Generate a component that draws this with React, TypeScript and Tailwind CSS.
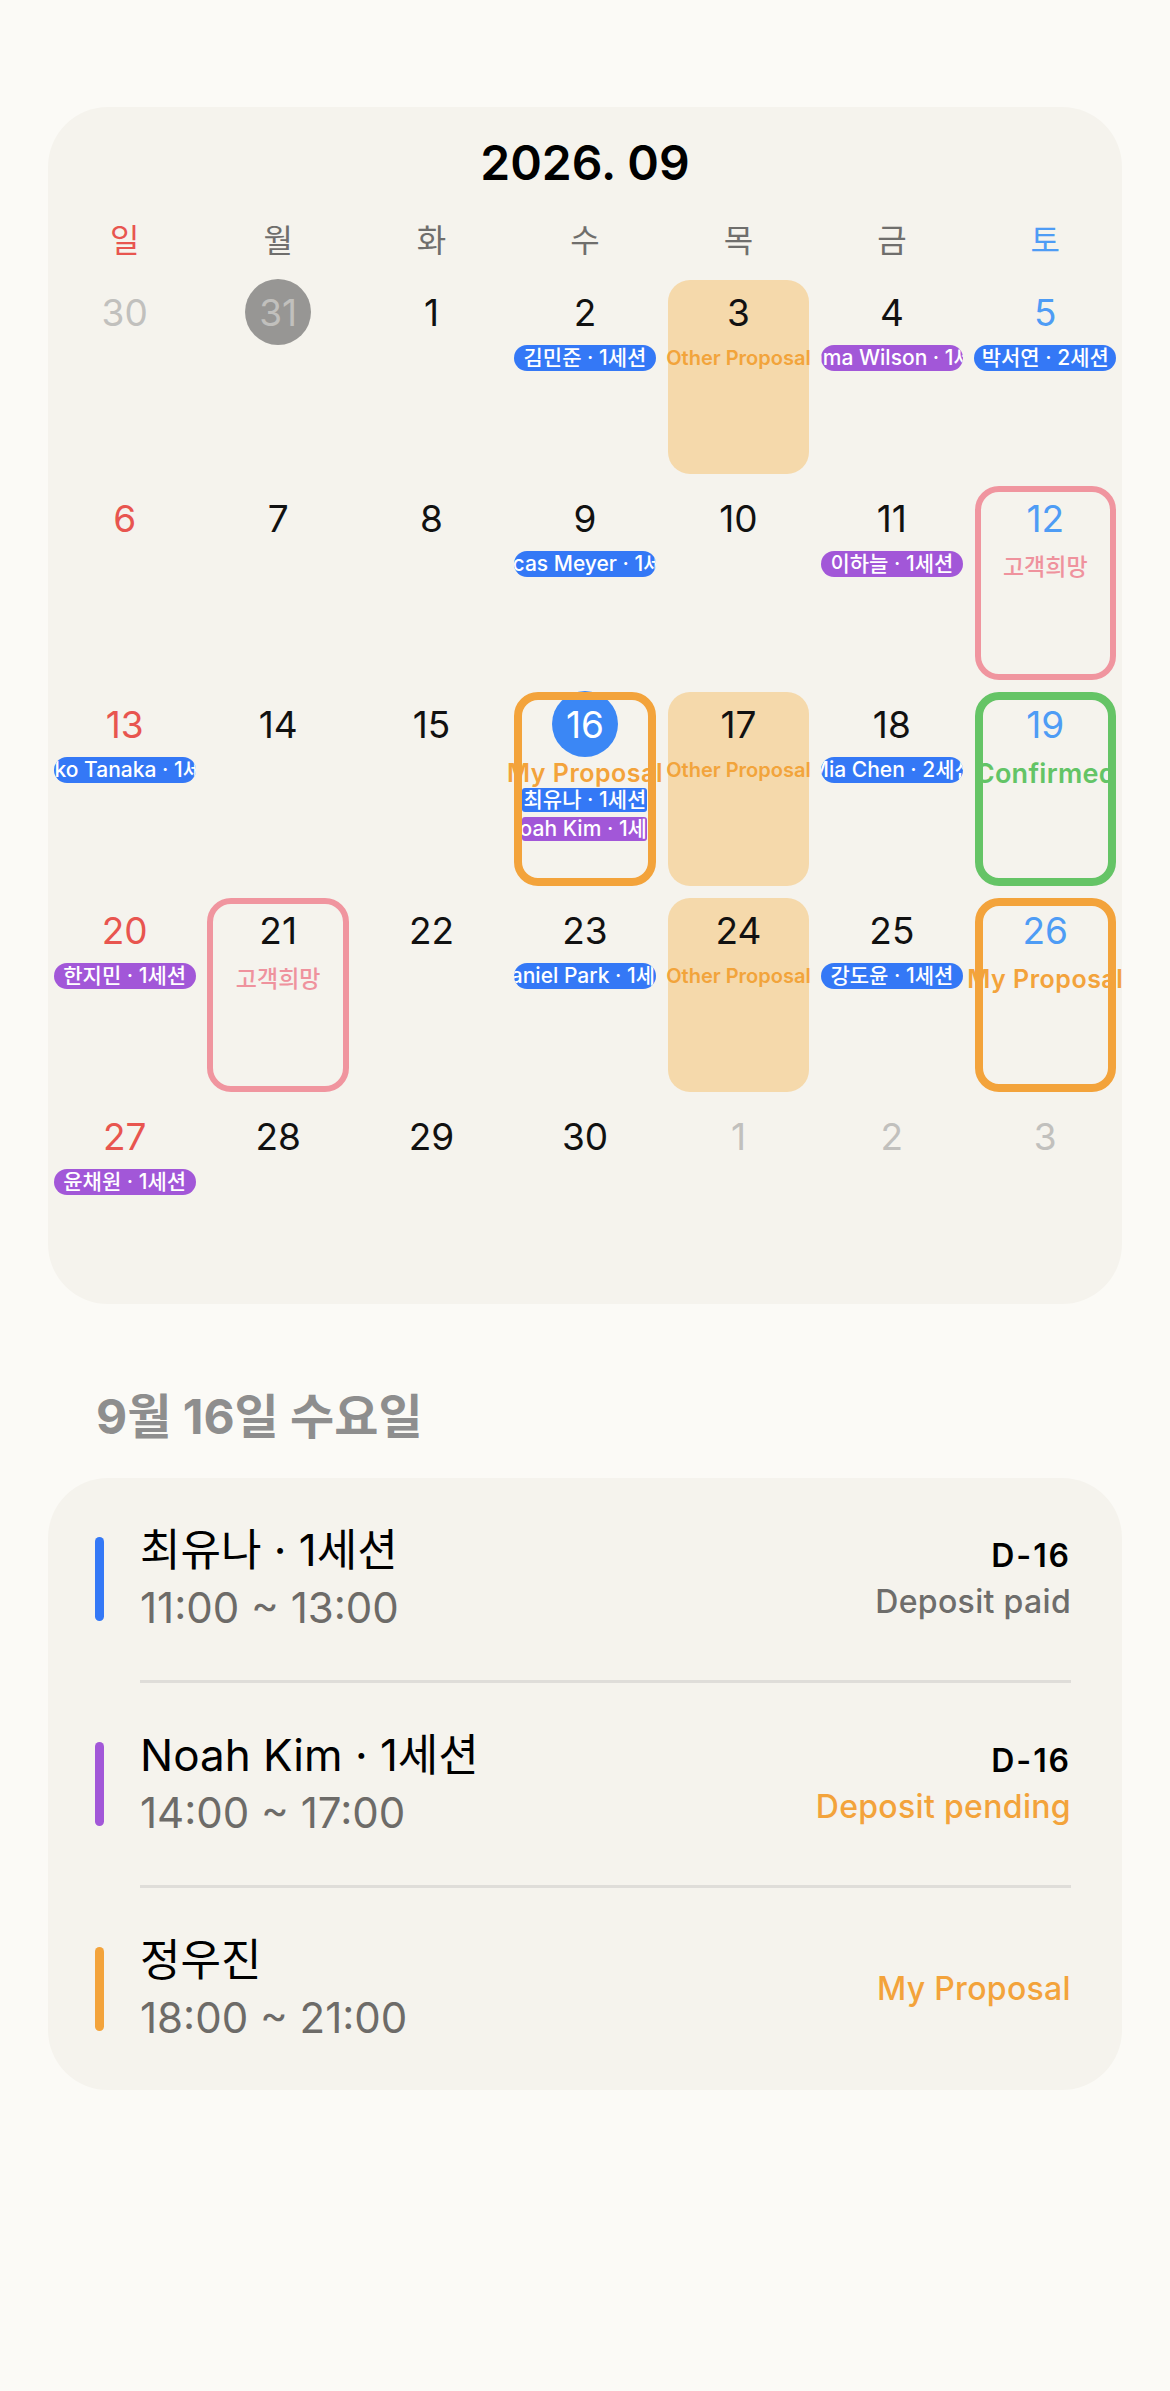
import React from "react";

type ChipColor = "blue" | "purple";
type Outline = "pink" | "green" | "orange";
type Label = "other" | "wish" | "mine" | "confirmed";

interface Chip {
  text: string;
  color: ChipColor;
}

interface Day {
  n: number;
  tone?: "sun" | "sat" | "muted";
  circle?: "gray" | "blue";
  chips?: Chip[];
  fill?: boolean;
  outline?: Outline;
  label?: Label;
}

const chipBg: Record<ChipColor, string> = {
  blue: "bg-[#3478f6]",
  purple: "bg-[#a257d8]",
};

const outlineCls: Record<Outline, string> = {
  pink: "border-[6px] border-[#f0959f]",
  green: "border-[8px] border-[#65c466]",
  orange: "border-[8px] border-[#f3a33b]",
};

const labelCls: Record<Label, string> = {
  other: "h-[26px] text-[20px] leading-[26px] font-semibold text-[#f2a43b]",
  wish: "mt-[2px] h-[28px] text-[23px] leading-[28px] font-medium text-[#ef929d]",
  mine: "mt-[2px] h-[28px] text-[25px] leading-[28px] font-semibold tracking-[0.02em] text-[#f3a33b]",
  confirmed: "mt-[3px] h-[28px] text-[27px] leading-[28px] font-semibold tracking-[0.01em] text-[#63c466]",
};

const labelText: Record<Label, string> = {
  other: "Other Proposal",
  wish: "고객희망",
  mine: "My Proposal",
  confirmed: "Confirmed",
};

const numberColor = {
  normal: "text-[#111111]",
  sun: "text-[#e8554f]",
  sat: "text-[#4e9cf5]",
  muted: "text-[#c1c0bd]",
};

const weeks: Day[][] = [
  [
    { n: 30, tone: "muted" },
    { n: 31, tone: "muted", circle: "gray" },
    { n: 1 },
    { n: 2, chips: [{ text: "김민준 · 1세션", color: "blue" }] },
    { n: 3, fill: true, label: "other" },
    { n: 4, chips: [{ text: "Emma Wilson · 1세션", color: "purple" }] },
    { n: 5, tone: "sat", chips: [{ text: "박서연 · 2세션", color: "blue" }] },
  ],
  [
    { n: 6, tone: "sun" },
    { n: 7 },
    { n: 8 },
    { n: 9, chips: [{ text: "Lucas Meyer · 1세션", color: "blue" }] },
    { n: 10 },
    { n: 11, chips: [{ text: "이하늘 · 1세션", color: "purple" }] },
    { n: 12, tone: "sat", outline: "pink", label: "wish" },
  ],
  [
    { n: 13, tone: "sun", chips: [{ text: "Yuko Tanaka · 1세션", color: "blue" }] },
    { n: 14 },
    { n: 15 },
    {
      n: 16,
      circle: "blue",
      outline: "orange",
      label: "mine",
      chips: [
        { text: "최유나 · 1세션", color: "blue" },
        { text: "Noah Kim · 1세션", color: "purple" },
      ],
    },
    { n: 17, fill: true, label: "other" },
    { n: 18, chips: [{ text: "Mia Chen · 2세션", color: "blue" }] },
    { n: 19, tone: "sat", outline: "green", label: "confirmed" },
  ],
  [
    { n: 20, tone: "sun", chips: [{ text: "한지민 · 1세션", color: "purple" }] },
    { n: 21, outline: "pink", label: "wish" },
    { n: 22 },
    { n: 23, chips: [{ text: "Daniel Park · 1세션", color: "blue" }] },
    { n: 24, fill: true, label: "other" },
    { n: 25, chips: [{ text: "강도윤 · 1세션", color: "blue" }] },
    { n: 26, tone: "sat", outline: "orange", label: "mine" },
  ],
  [
    { n: 27, tone: "sun", chips: [{ text: "윤채원 · 1세션", color: "purple" }] },
    { n: 28 },
    { n: 29 },
    { n: 30 },
    { n: 1, tone: "muted" },
    { n: 2, tone: "muted" },
    { n: 3, tone: "muted" },
  ],
];

const weekdays = [
  { t: "일", c: "text-[#e8554f]" },
  { t: "월", c: "text-[#6f6e6c]" },
  { t: "화", c: "text-[#6f6e6c]" },
  { t: "수", c: "text-[#6f6e6c]" },
  { t: "목", c: "text-[#6f6e6c]" },
  { t: "금", c: "text-[#6f6e6c]" },
  { t: "토", c: "text-[#4e9cf5]" },
];

const ChipPill: React.FC<{ chip: Chip; boxed?: boolean; className?: string }> = ({ chip, boxed, className }) => (
  <div
    className={`flex shrink-0 justify-center overflow-hidden ${chipBg[chip.color]} ${
      boxed ? "h-[24px] w-[125px] rounded-[3px]" : "h-[26px] w-[142px] rounded-full"
    } ${className ?? ""}`}
  >
    <span
      className={`shrink-0 whitespace-nowrap text-[21px] font-medium text-white ${
        boxed ? "leading-[24px]" : "leading-[26px]"
      }`}
    >
      {chip.text}
    </span>
  </div>
);

const DayCell: React.FC<{ day: Day }> = ({ day }) => {
  const color = day.circle === "blue" ? "text-white" : numberColor[day.tone ?? "normal"];
  const circleBg =
    day.circle === "blue" ? "bg-[#3b87f5]" : day.circle === "gray" ? "bg-[#979694]" : "";
  const boxed = !!day.outline;

  return (
    <div className="relative h-[206px]">
      {day.fill && (
        <div className="absolute bottom-[6px] left-[6px] right-[6px] top-[6px] rounded-[22px] bg-[#f5d9ab]" />
      )}
      <div className="relative flex flex-col items-center">
        <div
          className={`mt-[5px] flex h-[66px] w-[66px] items-center justify-center rounded-full text-[37px] leading-none ${circleBg} ${color}`}
        >
          {day.n}
        </div>
        {day.label && (
          <div className={`whitespace-nowrap ${labelCls[day.label]}`}>{labelText[day.label]}</div>
        )}
        {day.chips?.map((chip, i) => (
          <ChipPill
            key={chip.text}
            chip={chip}
            boxed={boxed}
            className={boxed ? (i === 0 ? "mt-[1px]" : "mt-[5px]") : ""}
          />
        ))}
      </div>
      {day.outline && (
        <div
          className={`pointer-events-none absolute bottom-[6px] left-[6px] right-[6px] top-[6px] rounded-[24px] ${outlineCls[day.outline]}`}
        />
      )}
    </div>
  );
};

interface Session {
  name: string;
  time: string;
  bar: string;
  dday?: string;
  status: string;
  statusCls: string;
}

const sessions: Session[] = [
  {
    name: "최유나 · 1세션",
    time: "11:00 ~ 13:00",
    bar: "bg-[#3478f6]",
    dday: "D-16",
    status: "Deposit paid",
    statusCls: "text-[#6e6d6b]",
  },
  {
    name: "Noah Kim · 1세션",
    time: "14:00 ~ 17:00",
    bar: "bg-[#a257d8]",
    dday: "D-16",
    status: "Deposit pending",
    statusCls: "text-[#f3a33b]",
  },
  {
    name: "정우진",
    time: "18:00 ~ 21:00",
    bar: "bg-[#f3a33b]",
    status: "My Proposal",
    statusCls: "text-[#f3a33b]",
  },
];

export default function App() {
  return (
    <div className="min-h-[2391px] w-full bg-[#fbfaf6] pt-[107px] font-[Inter,'Noto_Sans_CJK_KR',sans-serif]">
      {/* month calendar */}
      <div className="mx-[48px] rounded-[60px] bg-[#f5f3ed] pt-[26px]">
        <div className="h-[60px] text-center text-[48px] font-semibold leading-[60px] text-black">
          2026. 09
        </div>
        <div className="mt-[26px] grid grid-cols-7">
          {weekdays.map((w) => (
            <div key={w.t} className={`h-[44px] text-center text-[32px] leading-[44px] ${w.c}`}>
              {w.t}
            </div>
          ))}
        </div>
        <div className="mt-[11px] grid grid-cols-7">
          {weeks.flat().map((d, i) => (
            <DayCell key={i} day={d} />
          ))}
        </div>
      </div>

      {/* selected day */}
      <div className="mt-[83px] h-[60px] pl-[96px] text-[48px] font-bold leading-[60px] text-[#8e8e8e]">
        9월 16일 수요일
      </div>

      <div className="mx-[48px] mt-[31px] rounded-[60px] bg-[#f5f3ed]">
        {sessions.map((s, i) => (
          <React.Fragment key={s.name}>
            {i > 0 && <div className="ml-[92px] mr-[51px] h-[3px] bg-[#dfddd9]" />}
            <div className="flex h-[202px] items-center pl-[47px] pr-[51px]">
              <div className={`h-[84px] w-[9px] rounded-full ${s.bar}`} />
              <div className="ml-[36px] flex-1">
                <div className="text-[44px] leading-[58px] text-black">{s.name}</div>
                <div className="text-[42px] leading-[58px] text-[#6d6b68]">{s.time}</div>
              </div>
              <div className="flex flex-col items-end">
                {s.dday && (
                  <div className="text-[32px] font-semibold leading-[46px] tracking-[0.06em] text-black">
                    {s.dday}
                  </div>
                )}
                <div className={`text-[32px] font-medium leading-[46px] tracking-[0.01em] ${s.statusCls}`}>
                  {s.status}
                </div>
              </div>
            </div>
          </React.Fragment>
        ))}
      </div>
    </div>
  );
}
